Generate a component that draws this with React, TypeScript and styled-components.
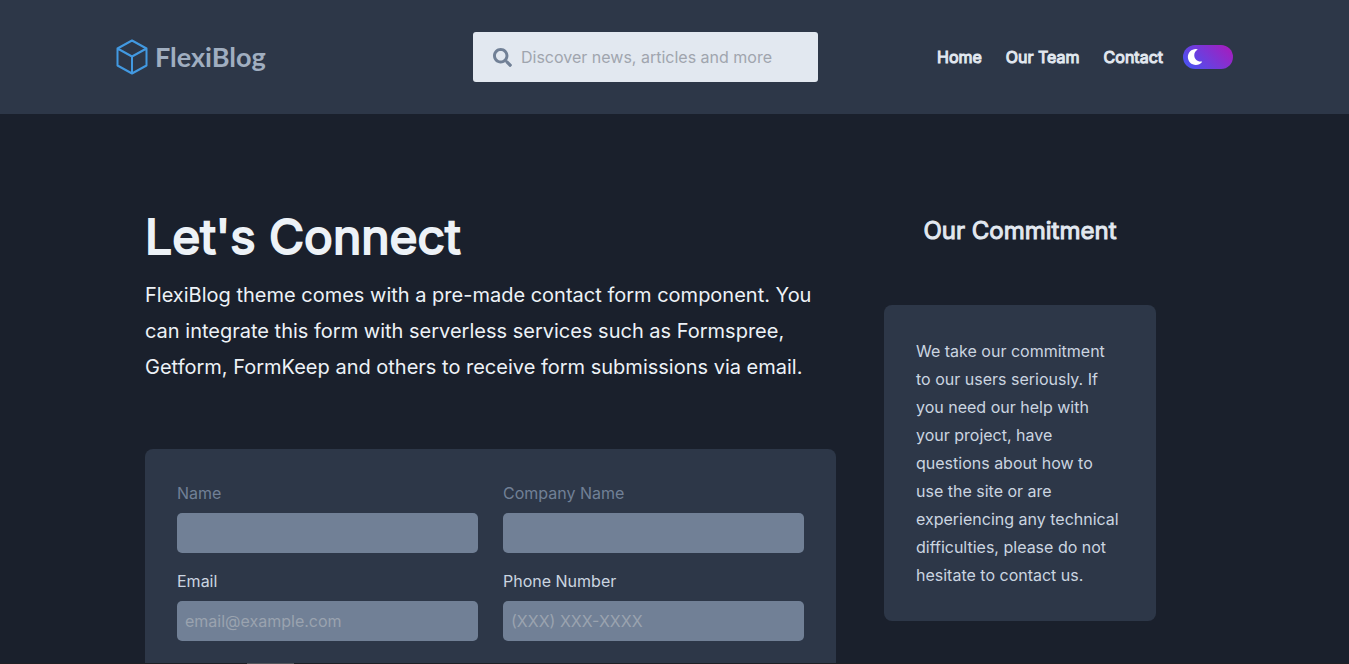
import React from "react";
import styled, { createGlobalStyle } from "styled-components";
import { FaSearch, FaMoon } from "react-icons/fa";

const GlobalStyle = createGlobalStyle`
  *, *::before, *::after { box-sizing: border-box; }
  body {
    margin: 0;
    background: #1a202c;
    color: #e2e8f0;
    font-family: Inter, "Liberation Sans", sans-serif;
    font-size: 16px;
  }
  h1, h2, p { margin: 0; }
`;

const Page = styled.div`
  display: flex;
  flex-direction: column;
  height: 100vh;
  overflow: hidden;
`;

const Header = styled.header`
  flex: none;
  background: #2d3748;
  padding: 32px 24px;
`;

const HeaderInner = styled.div`
  display: grid;
  grid-template-columns: 345px 345px 1fr;
  column-gap: 12px;
  align-items: center;
  max-width: 1117px;
  margin: 0 auto;
`;

const Logo = styled.a`
  display: flex;
  align-items: center;
  gap: 7px;
  color: #a0aec0;
  font: 700 27px/36px Lato, sans-serif;
  text-decoration: none;
`;

const Search = styled.label`
  display: flex;
  align-items: center;
  gap: 9px;
  height: 50px;
  padding: 0 40px 0 20px;
  border-radius: 3px;
  background: #e2e8f0;
  color: #718096;
`;

const SearchInput = styled.input`
  flex: 1;
  min-width: 0;
  padding: 0;
  border: 0;
  outline: 0;
  background: transparent;
  color: #2d3748;
  font: inherit;
  &::placeholder { color: #a0a5ae; opacity: 1; }
`;

const Nav = styled.nav`
  display: flex;
  align-items: center;
  justify-content: flex-end;
  gap: 24px;
`;

const NavLink = styled.a`
  color: #e2e8f0;
  font-weight: 400;
  -webkit-text-stroke: 1px currentColor;
  line-height: 24px;
  white-space: nowrap;
  text-decoration: none;
`;

const ThemeToggle = styled.button`
  display: flex;
  align-items: center;
  width: 50px;
  height: 24px;
  margin-left: -4px;
  padding: 0 4px;
  border: 0;
  border-radius: 12px;
  background: linear-gradient(45deg, #4c51f0 10%, #a11fc0 90%);
  color: #fff;
`;

const Content = styled.main`
  flex: 1;
  min-height: 0;
  overflow: hidden;
  display: grid;
  grid-template-columns: minmax(0, 1fr) 368px;
  align-items: start;
  width: 100%;
  max-width: 1059px;
  margin: 0 auto;
  padding-top: 96px;
`;

const Title = styled.h1`
  color: #edf2f7;
  font-size: 48px;
  font-weight: 400;
  -webkit-text-stroke: 2px currentColor;
  line-height: 54px;
`;

const Lead = styled.p`
  margin-top: 13px;
  color: #edf2f7;
  font-size: 20px;
  line-height: 36px;
`;

const Form = styled.form`
  display: grid;
  grid-template-columns: 1fr 1fr;
  gap: 16px 25px;
  margin-top: 64px;
  padding: 32px 32px 64px;
  border-radius: 8px;
  background: #2d3748;
`;

const Field = styled.label<{ $muted?: boolean }>`
  display: flex;
  flex-direction: column;
  gap: 8px;
  color: ${(p) => (p.$muted ? "#718096" : "#cbd5e0")};
  line-height: 24px;
`;

const TextInput = styled.input`
  width: 100%;
  height: 40px;
  padding: 0 8px;
  border: 0;
  border-radius: 5px;
  background: #718096;
  color: #edf2f7;
  font: inherit;
  &::placeholder { color: #9aa3af; opacity: 1; }
`;

const Aside = styled.aside`
  padding: 0 48px;
`;

const AsideTitle = styled.h2`
  padding: 4px 0 58px;
  font-size: 24px;
  font-weight: 400;
  -webkit-text-stroke: 1px currentColor;
  line-height: 33px;
  text-align: center;
  white-space: nowrap;
`;

const Card = styled.p`
  padding: 32px 34px 32px 32px;
  border-radius: 8px;
  background: #2d3748;
  color: #cbd5e0;
  line-height: 28px;
`;

const BottomEdge = styled.div`
  flex: none;
  height: 1px;
  padding-left: 247px;
  background: #1e2024;
  &::before {
    content: "";
    display: block;
    width: 47px;
    height: 1px;
    background: #55575c;
  }
`;

const fields = [
  { name: "name", label: "Name", type: "text", muted: true },
  { name: "company", label: "Company Name", type: "text", muted: true },
  { name: "email", label: "Email", type: "email", placeholder: "email@example.com" },
  { name: "phone", label: "Phone Number", type: "tel", placeholder: "(XXX) XXX-XXXX" },
];

const CubeIcon = () => (
  <svg width="32" height="36" viewBox="0 0 32 36" fill="none" stroke="#4299e1" strokeWidth="2" strokeLinejoin="round" aria-hidden="true">
    <path d="M16 1.5 30.5 9.5V26.5L16 34.5 1.5 26.5V9.5ZM1.5 9.5 16 17.5 30.5 9.5M16 17.5V34.5" />
  </svg>
);

export default function App() {
  return (
    <Page>
      <GlobalStyle />
      <Header>
        <HeaderInner>
          <Logo href="#">
            <CubeIcon />
            FlexiBlog
          </Logo>
          <Search>
            <FaSearch size={19} aria-hidden="true" />
            <SearchInput aria-label="Search" placeholder="Discover news, articles and more" />
          </Search>
          <Nav>
            <NavLink href="#">Home</NavLink>
            <NavLink href="#">Our Team</NavLink>
            <NavLink href="#">Contact</NavLink>
            <ThemeToggle type="button" aria-label="Toggle dark mode">
              <FaMoon size={16} aria-hidden="true" />
            </ThemeToggle>
          </Nav>
        </HeaderInner>
      </Header>
      <Content>
        <section>
          <Title>Let's Connect</Title>
          <Lead>
            FlexiBlog theme comes with a pre-made contact form component. You can integrate this form with
            serverless services such as Formspree, Getform, FormKeep and others to receive form submissions via email.
          </Lead>
          <Form>
            {fields.map((f) => (
              <Field key={f.name} $muted={f.muted}>
                {f.label}
                <TextInput name={f.name} type={f.type} placeholder={f.placeholder} />
              </Field>
            ))}
          </Form>
        </section>
        <Aside>
          <AsideTitle>Our Commitment</AsideTitle>
          <Card>
            We take our commitment to our users seriously. If you need our help with your project, have questions
            about how to use the site or are experiencing any technical difficulties, please do not hesitate to
            contact us.
          </Card>
        </Aside>
      </Content>
      <BottomEdge />
    </Page>
  );
}
